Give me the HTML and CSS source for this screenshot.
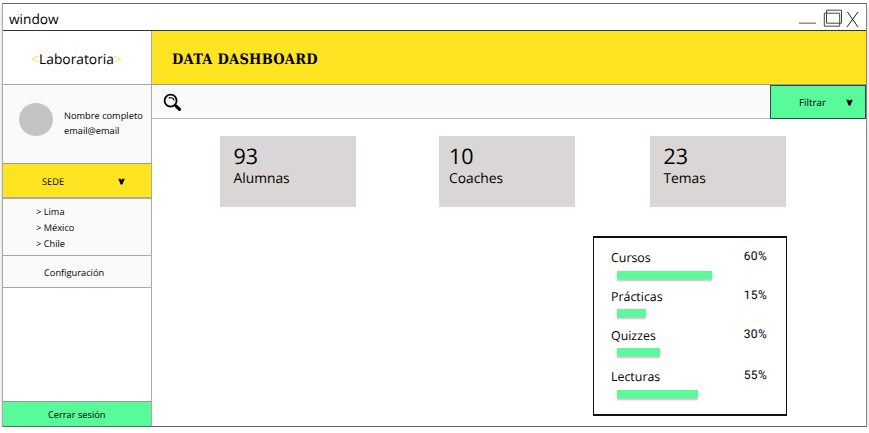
FILE: index.html
```html
<!DOCTYPE html>
<html lang="es">
<head>
<meta charset="utf-8">
<title>Data Dashboard</title>
<link rel="stylesheet" href="styles.css">
</head>
<body>
<div class="window">
  <header class="titlebar">
    <span class="window-name">window</span>
    <svg class="controls" width="62" height="20" viewBox="0 0 62 20" fill="none">
      <path d="M1 15.2h17" stroke="#888" stroke-width="1.4"/>
      <path d="M28.5 2.2h15v13h-15zM26.3 5.2h15.4v13H26.3z" stroke="#444"/>
      <path d="M49.5 4l10.5 15M60 4L49 19" stroke="#222"/>
    </svg>
  </header>
  <div class="body">
    <aside class="sidebar">
      <div class="brand"><span class="angle">&lt;</span>Laboratoria<span class="angle">&gt;</span></div>
      <div class="profile">
        <div class="avatar"></div>
        <div class="person"><div>Nombre completo</div><div>email@email</div></div>
      </div>
      <div class="sede"><span>SEDE</span><svg class="arrow" width="7" height="7" viewBox="0 0 7 7"><path d="M.3.7h2.3l.9 1.4.9-1.4h2.3L4.4 6.5H2.7z"/></svg></div>
      <ul class="places"><li>&gt; Lima</li><li>&gt; México</li><li>&gt; Chile</li></ul>
      <div class="config">Configuración</div>
      <div class="logout">Cerrar sesión</div>
    </aside>
    <main class="main">
      <h1 class="heading">DATA DASHBOARD</h1>
      <div class="toolbar">
        <div class="search">
          <svg width="20" height="20" viewBox="0 0 20 20" fill="none" stroke="#000" stroke-linecap="round">
            <circle cx="8.6" cy="7.7" r="6" stroke-width="1.8"/>
            <path d="M7 4.9q4.2-.8 5 2.2" stroke-width="1.1"/>
            <path d="M13 12l1.4 1.2" stroke-width="2"/>
            <path d="M14.4 13.3l3.1 3" stroke-width="3.2"/>
          </svg>
        </div>
        <div class="filter"><span>Filtrar</span><svg class="arrow" width="7" height="7" viewBox="0 0 7 7"><path d="M.3.7h2.3l.9 1.4.9-1.4h2.3L4.4 6.5H2.7z"/></svg></div>
      </div>
      <section class="cards">
        <div class="card card-alumnas"><b>93</b><span>Alumnas</span></div>
        <div class="card card-coaches"><b>10</b><span>Coaches</span></div>
        <div class="card card-temas"><b>23</b><span>Temas</span></div>
      </section>
      <section class="progress">
        <div class="item cursos"><div class="row"><span>Cursos</span><em>60%</em></div><div class="bar"></div></div>
        <div class="item practicas"><div class="row"><span>Prácticas</span><em>15%</em></div><div class="bar"></div></div>
        <div class="item quizzes"><div class="row"><span>Quizzes</span><em>30%</em></div><div class="bar"></div></div>
        <div class="item lecturas"><div class="row"><span>Lecturas</span><em>55%</em></div><div class="bar"></div></div>
      </section>
    </main>
  </div>
</div>
</body>
</html>
```
FILE: styles.css
```css
* { box-sizing: border-box; }
body { margin: 0; background: #fff; color: #000; font: 9.25px/15px "Open Sans", sans-serif; text-rendering: geometricPrecision; }
.window { width: 865px; height: 424px; margin: 3px 0 0 2px; border: 1px solid #666; border-left-color: #aaa; border-right-color: #888; box-shadow: 0 3px 3px rgba(0,0,0,.25); display: flex; flex-direction: column; background: #fff; }
.titlebar { height: 27px; border-bottom: 1px solid #333; display: flex; justify-content: space-between; align-items: center; padding: 4px 6px 0 6px; }
.window-name { font-size: 13.7px; line-height: 18px; margin-top: 2px; }
.controls { display: block; margin-bottom: 3px; }
.body { flex: 1; display: grid; grid-template-columns: 149px 1fr; }
.sidebar { border-right: 1px solid #aaa; display: flex; flex-direction: column; }
.brand { height: 54px; border-bottom: 1px solid #aaa; font-size: 13.8px; line-height: 57px; padding-right: 1px; text-align: center; white-space: nowrap; }
.angle { color: #ffe521; }
.profile { height: 79px; border-bottom: 1px solid #999; background: #fafafa; display: flex; padding: 18px 0 0 16px; }
.avatar { width: 34px; height: 33px; border-radius: 50%; background: #c4c4c4; }
.person { margin: 5px 0 0 11px; white-space: nowrap; }
.sede { height: 35px; background: #ffe421; border-bottom: 2px solid #aaa; display: flex; align-items: center; justify-content: space-between; padding: 1px 26px 0 39px; }
.arrow { display: block; }
.places { list-style: none; margin: 0; height: 57px; padding: 5px 0 0 33px; background: #fafafa; border-bottom: 1px solid #aaa; line-height: 15.9px; }
.config { height: 32px; background: #fafafa; border-bottom: 1px solid #aaa; line-height: 33px; padding-left: 41px; }
.logout { margin-top: auto; height: 25px; border-top: 1px solid #999; background: #58fa9a; line-height: 25px; padding-left: 45px; }
.main { display: flex; flex-direction: column; }
.heading { margin: 0; height: 54px; background: #ffe421; border-bottom: 1px solid #999; padding-left: 20px; font: bold 14.5px/58px "DejaVu Serif Condensed", "DejaVu Serif", serif; letter-spacing: .25px; }
.toolbar { height: 34px; display: flex; }
.search { flex: 1; background: #fafafa; border-bottom: 1px solid #bbb; padding: 8px 0 0 10px; }
.filter { width: 96px; background: #58fa9a; border: 1px solid #254; display: flex; align-items: center; justify-content: space-between; padding: 0 12px 0 28px; font-size: 9.8px; }
.cards { display: flex; padding: 17px 79px 0 68px; }
.card { width: 136px; height: 71px; background: #dad6d5; display: flex; flex-direction: column; padding: 6px 13.5px; }
.card b { font-size: 21.5px; font-weight: 400; line-height: 29px; }
.card span { font-size: 13.8px; line-height: 15px; }
.card-coaches { margin-left: 83px; padding-left: 10px; }
.card-temas { margin-left: 75px; }
.progress { width: 194px; height: 180px; margin: 29px 79px 0 auto; border: 2px solid #111; border-left-width: 1px; border-right-width: 1px; padding: 10px 19px 0 17px; }
.item { height: 39px; }
.row { display: flex; justify-content: space-between; height: 18px; font-size: 12.4px; line-height: 20px; }
.row em { font: normal 12px/16px Roboto, sans-serif; letter-spacing: .3px; }
.bar { height: 8px; margin: 5px 0 0 6px; background: #58fa9a; box-shadow: 0 2px 2px rgba(0,0,0,.25); }
.cursos .bar { width: 95px; }
.practicas .bar { width: 29px; margin-top: 4px; }
.quizzes { height: 41px; }
.quizzes .bar { width: 43px; margin-top: 4px; }
.lecturas .bar { width: 81px; }
```
